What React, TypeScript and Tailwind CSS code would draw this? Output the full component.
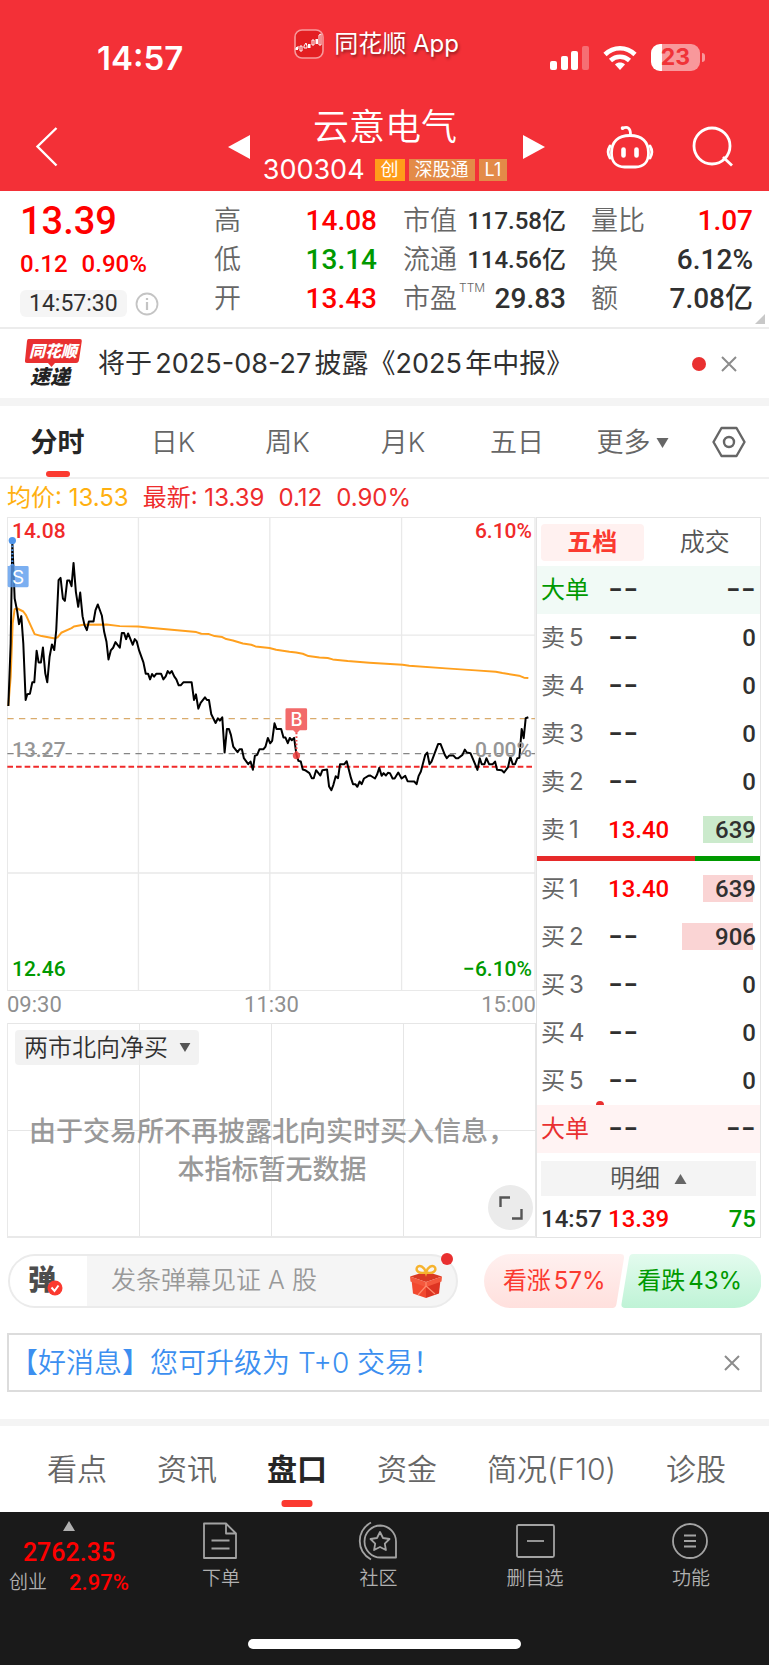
import type { ReactNode } from "react";

const NUM = "[font-family:Roboto,'Noto_Sans_CJK_SC',sans-serif]";

const PRICE_LINE =
  "25,588 32,400 37,95 44,265 52,305 57,342 64,318 70,400 77,570 82,553 90,551 97,517 103,517 110,422 116,457 123,457 129,412 136,490 142,517 149,440 156,403 163,420 169,360 176,210 182,203 189,265 195,272 202,211 209,211 215,228 221,158 228,245 235,290 241,247 248,318 254,345 261,360 267,334 281,334 287,300 294,283 306,316 313,365 320,395 326,448 333,421 340,413 347,396 360,413 366,369 373,369 379,387 385,370 399,404 405,387 411,394 418,421 431,457 438,491 445,491 451,508 457,492 463,500 470,491 484,491 491,508 498,499 504,483 510,490 516,483 524,500 530,508 537,526 543,526 551,517 576,517 583,570 589,553 596,596 603,579 616,562 622,570 628,570 635,613 648,639 655,625 661,632 668,622 675,728 682,657 688,657 694,675 701,710 714,727 720,718 727,718 733,745 746,763 753,755 760,780 766,738 773,735 780,718 792,718 798,710 805,684 812,700 818,693 825,640 831,657 845,657 852,683 858,683 865,700 871,684 877,691 884,684 891,735 897,753 904,755 910,779 917,781 930,790 937,805 943,805 950,781 963,797 969,781 983,779 989,830 996,841 1002,825 1009,799 1016,805 1022,763 1035,763 1042,754 1055,805 1061,823 1068,823 1074,831 1081,815 1087,823 1094,806 1107,798 1113,797 1127,806 1133,795 1140,774 1147,798 1153,790 1160,797 1166,789 1172,790 1180,806 1186,806 1197,788 1207,806 1218,798 1225,814 1245,815 1252,823 1258,799 1265,785 1278,735 1284,728 1291,763 1297,755 1317,702 1324,702 1337,735 1343,745 1350,737 1363,737 1370,745 1377,745 1390,735 1397,719 1403,728 1414,730 1428,763 1435,780 1442,745 1448,763 1456,763 1462,745 1470,763 1481,763 1488,755 1494,780 1508,781 1515,788 1527,772 1534,740 1541,763 1548,763 1555,745 1561,744 1568,657 1574,685 1580,625 1588,622";

const AVERAGE_LINE =
  "25,588 32,500 38,340 44,297 52,295 70,304 78,315 104,372 125,378 165,385 173,382 184,368 215,354 222,349 250,344 320,343 360,348 415,349 450,353 590,366 605,371 628,372 645,378 668,381 680,387 700,391 730,400 755,404 768,409 810,414 830,419 870,425 890,427 910,431 927,438 960,442 985,444 1000,448 1045,453 1110,458 1210,464 1230,467 1340,475 1430,481 1490,485 1510,489 1560,497 1575,503 1588,504";

function StatusBar() {
  return (
    <div className="relative flex h-[94px] items-start justify-between pt-[38px] pr-[64px] pl-[97px]">
      <span className="text-[33px] leading-10 font-semibold">14:57</span>
      <div className="absolute inset-x-0 top-[28px] flex items-center justify-center gap-[10px] pr-[16px]">
        <svg width="30" height="30" viewBox="0 0 30 30" aria-hidden="true">
          <rect x="1" y="1" width="28" height="28" rx="7" fill="#e31f22" stroke="#f79a9c" strokeWidth="1.6" />
          <g stroke="#fff" strokeWidth="1" fill="none">
            <path d="M1 20h3v-3M6 19v3h2v-5H6zM10 17l2-3 1 3v2h-3zM18 12v4h2v-5h-2z" />
            <path d="M25 6l2-1v11h-2z" />
          </g>
          <path d="M2 18h2v3H2zM14 15h2.500v4H14zM21.500 10h2.500v5h-2.500z" fill="#fff" />
        </svg>
        <span className="text-[24px] leading-8 [text-shadow:1px_2px_3px_rgba(0,0,0,0.45)]">同花顺 App</span>
      </div>
      <div className="flex items-center gap-[14px] pt-[6px]">
        <svg width="39" height="26" viewBox="0 0 39 26" fill="#fff" aria-hidden="true">
          <rect x="0" y="16" width="7" height="9" rx="2" />
          <rect x="11" y="11" width="7" height="14" rx="2" />
          <rect x="21" y="6" width="7" height="19" rx="2" />
          <rect x="32" y="1" width="7" height="24" rx="2" opacity=".3" />
        </svg>
        <svg width="34" height="26" viewBox="0 0 34 26" fill="none" stroke="#fff" strokeWidth="4.600" aria-hidden="true">
          <path d="M2 9.500C10.500 1.200 23.500 1.200 32 9.500" />
          <path d="M7.500 15.500c5.500-5 13.500-5 19 0" />
          <path d="M17 25l-5-5.500c2.800-2.600 7.200-2.600 10 0z" fill="#fff" stroke="none" />
        </svg>
        <div className="flex items-center gap-[2px]">
          <span className="flex h-[27px] w-[49px] items-center justify-center rounded-[9px] bg-[linear-gradient(90deg,#fff_22%,#f8989b_22%)] text-[23px] leading-none font-bold text-[#f03238]">
            23
          </span>
          <span className="h-[9px] w-[3px] rounded-r-full bg-[#f8989b]" />
        </div>
      </div>
    </div>
  );
}

function Badge({ children, strong }: { children: ReactNode; strong?: boolean }) {
  return (
    <span className={`flex h-[22px] items-center px-[6px] text-[18px] leading-none ${strong ? "bg-[#ff9c1a]" : "bg-[#e38b48]"}`}>
      {children}
    </span>
  );
}

function NavBar() {
  return (
    <div className="flex h-[97px] items-center">
      <div className="w-[228px] pl-[34px]">
        <button aria-label="返回" className="block pt-[8px]">
          <svg width="26" height="42" viewBox="0 0 26 42" fill="none" stroke="#fff" strokeWidth="2.400">
            <path d="M22.500 2L3.500 20.500L22.500 39.500" />
          </svg>
        </button>
      </div>
      <div className="flex flex-1 items-center justify-between">
        <button aria-label="上一只" className="pt-[8px]">
          <svg width="23" height="26" viewBox="0 0 23 26" fill="#fff"><path d="M0 13L22 1v24z" /></svg>
        </button>
        <div className="flex flex-col items-center gap-[7px] pt-[3px] pr-[3px]">
          <h1 className="text-[36px] leading-[44px] font-[350]">云意电气</h1>
          <div className="flex h-[28px] items-center gap-[4px]">
            <span className="mr-[6px] text-[27px] leading-7">300304</span>
            <Badge strong>创</Badge>
            <Badge>深股通</Badge>
            <Badge>L1</Badge>
          </div>
        </div>
        <button aria-label="下一只" className="pt-[8px]">
          <svg width="23" height="26" viewBox="0 0 23 26" fill="#fff"><path d="M23 13L1 1v24z" /></svg>
        </button>
      </div>
      <div className="flex w-[224px] items-center justify-end gap-[38px] pt-[8px] pr-[35px]">
        <button aria-label="智能助手">
          <svg width="48" height="46" viewBox="0 0 48 46" fill="none" stroke="#fff" strokeWidth="2.800" strokeLinecap="round">
            <path d="M16.500 4.500c5-2.500 8-.5 8 6" />
            <circle cx="16.500" cy="4" r="1.800" fill="#fff" stroke="none" />
            <path d="M24 11.500c12 0 18.500 6.500 18.500 17.500 0 9-5 14-13 14h-11c-8 0-13-5-13-14 0-11 6.500-17.500 18.500-17.500z" />
            <path d="M4 22c-2.500 4-2.500 8 0 12M44 22c2.500 4 2.500 8 0 12" />
            <path d="M17.500 25.500v6M30.500 25.500v6" strokeWidth="4.600" />
          </svg>
        </button>
        <button aria-label="搜索">
          <svg width="42" height="42" viewBox="0 0 42 42" fill="none" stroke="#fff" strokeWidth="2.800">
            <circle cx="20" cy="20" r="18" />
            <path d="M31 31l9 8.500" />
          </svg>
        </button>
      </div>
    </div>
  );
}

type Metric = { label: string; value: string; tone: string; small?: boolean; note?: string };

function MetricColumn({ items }: { items: Metric[] }) {
  return (
    <dl className="flex flex-col">
      {items.map((m) => (
        <div key={m.label} className="flex h-[39px] items-center justify-between">
          <dt className="flex items-center text-[27px] leading-9 font-[350] text-[#666]">
            {m.label}
            {m.note && <sup className="self-start pt-[7px] pl-[2px] text-[12px] leading-none">{m.note}</sup>}
          </dt>
          <dd className={`${NUM} font-medium whitespace-nowrap ${m.small ? "text-[24px]" : "text-[28px]"} ${m.tone}`}>
            {m.value}
          </dd>
        </div>
      ))}
    </dl>
  );
}

const RED = "text-[#ff0000]";
const GREEN = "text-[#009900]";
const INK = "text-[#303030]";

function Quote() {
  return (
    <section className="relative grid h-[138px] grid-cols-[214fr_163fr_26fr_163fr_25fr_162fr_16fr] border-b-2 border-[#ececec] pt-[10px]">
      <div className={`${NUM} pl-[20px]`}>
        <p className={`text-[38px] leading-[40px] font-medium ${RED}`}>13.39</p>
        <p className={`flex gap-[14px] pt-[8px] text-[24px] leading-[30px] font-medium ${RED}`}>
          <span>0.12</span>
          <span>0.90%</span>
        </p>
        <div className="flex items-center gap-[8px] pt-[11px]">
          <span className={`rounded-[6px] bg-[#f5f5f5] px-[9px] text-[23px] leading-[27px] ${INK}`}>14:57:30</span>
          <svg width="24" height="24" viewBox="0 0 24 24" fill="none" stroke="#c4c4c4" strokeWidth="1.800" aria-hidden="true">
            <circle cx="12" cy="12" r="10.500" />
            <path d="M12 10v8M12 6v2" strokeWidth="2.200" />
          </svg>
        </div>
      </div>
      <MetricColumn
        items={[
          { label: "高", value: "14.08", tone: RED },
          { label: "低", value: "13.14", tone: GREEN },
          { label: "开", value: "13.43", tone: RED },
        ]}
      />
      <span />
      <MetricColumn
        items={[
          { label: "市值", value: "117.58亿", tone: INK, small: true },
          { label: "流通", value: "114.56亿", tone: INK, small: true },
          { label: "市盈", value: "29.83", tone: INK, note: "TTM" },
        ]}
      />
      <span />
      <MetricColumn
        items={[
          { label: "量比", value: "1.07", tone: RED },
          { label: "换", value: "6.12%", tone: INK },
          { label: "额", value: "7.08亿", tone: INK },
        ]}
      />
      <svg className="absolute right-[4px] bottom-[3px]" width="10" height="10" viewBox="0 0 10 10" fill="#c8c8c8" aria-hidden="true">
        <path d="M10 0v10H0z" />
      </svg>
    </section>
  );
}

function Cross({ label }: { label: string }) {
  return (
    <button aria-label={label}>
      <svg width="16" height="16" viewBox="0 0 16 16" stroke="#8c8c8c" strokeWidth="2">
        <path d="M1 1l14 14M15 1L1 15" />
      </svg>
    </button>
  );
}

function News() {
  return (
    <section className="flex h-[77px] items-center border-b-8 border-[#f4f4f4] pr-[32px] pl-[24px]">
      <svg width="58" height="60" viewBox="0 -4 58 60" fontFamily="'Noto Sans CJK SC',sans-serif" fontWeight="900" fontStyle="italic" aria-label="同花顺速递">
        <path d="M4.500 1H56q2 0 1.800 2L55 22q-.4 3-3 3H31l-3.500 4L24 25H3q-2.300 0-2-2.500L3 3q.2-2 1.500-2z" fill="#e93030" />
        <text x="5" y="19" fontSize="16" fill="#fff">同花顺</text>
        <text x="6" y="46" fontSize="20" fill="#222">速递</text>
      </svg>
      <a href="#news" className="flex-1 pl-[16px] text-[27px] leading-9 whitespace-nowrap text-[#303030] [text-autospace:normal]">
        将于2025-08-27披露《2025年中报》
      </a>
      <span className="mr-[15px] size-[14px] rounded-full bg-[#e93030]" />
      <Cross label="关闭公告" />
    </section>
  );
}

function Caret({ className, up }: { className: string; up?: boolean }) {
  return (
    <svg className={className} viewBox="0 0 12 10" fill="currentColor" aria-hidden="true">
      <path d={up ? "M0 10L6 0l6 10z" : "M0 0h12L6 10z"} />
    </svg>
  );
}

function PeriodTabs() {
  return (
    <nav className="grid h-[73px] grid-cols-[115fr_116fr_113fr_118fr_110fr_121fr_76fr] border-b-2 border-[#f0f0f0] text-[27px] font-[350] text-[#666]">
      <button className="relative pt-[3px] font-bold text-[#262626]">
        分时
        <span className="absolute bottom-0 left-1/2 h-[6px] w-[24px] -translate-x-1/2 rounded-[3px] bg-[#fb3a30]" />
      </button>
      <button className="pt-[3px]">日K</button>
      <button className="pt-[3px]">周K</button>
      <button className="pt-[3px]">月K</button>
      <button className="pt-[3px]">五日</button>
      <button className="flex items-center justify-center gap-[5px] pt-[3px]">
        更多
        <Caret className="h-[10px] w-[13px] text-[#666]" />
      </button>
      <button aria-label="设置" className="flex items-center justify-center pr-[4px]">
        <svg width="34" height="32" viewBox="0 0 34 32" fill="none" stroke="#666" strokeWidth="2.400" strokeLinejoin="round">
          <path d="M9.500 2h15L32.500 16l-8 14h-15L1.500 16z" />
          <circle cx="17" cy="16" r="5" />
        </svg>
      </button>
    </nav>
  );
}

function PriceChart() {
  const label = "absolute text-[21px] leading-[24px] font-medium";
  return (
    <div className={`relative ${NUM}`}>
      <svg className="block h-auto w-full" viewBox="21 20 1590 1425" fill="none" aria-label="分时走势">
        <path d="M22 21H1608V1444H22zM416 21V1444M811 21V1444M1207 21V1444M22 375H1608M22 1090H1608" stroke="#e9e9e9" strokeWidth="4" />
        <path d="M22 626H1608" stroke="#d9ab6c" strokeWidth="4" strokeDasharray="19 16" />
        <path d="M22 731H1608" stroke="#858585" strokeWidth="4" strokeDasharray="19 16" />
        <path d="M22 771H1608" stroke="#f02a2a" strokeWidth="6" strokeDasharray="17 9" />
        <polyline points={AVERAGE_LINE} stroke="#ffa01e" strokeWidth="6" strokeLinejoin="round" />
        <polyline points={PRICE_LINE} stroke="#000" strokeWidth="6" strokeLinejoin="round" />
        <path d="M37 95V167" stroke="#4f95ea" strokeWidth="6" strokeDasharray="5 6" />
        <circle cx="37" cy="91" r="11" fill="#4f95ea" />
        <path d="M28 167l9-8 9 8h36q4 0 4 4v56q0 4-4 4H27q-4 0-4-4v-60z" fill="#5a9bee" opacity=".8" />
        <text x="54" y="220" textAnchor="middle" fontFamily="Inter" fontSize="57" fill="#fff">S</text>
        <path d="M891 668V730" stroke="#ef4b4b" strokeWidth="6" strokeDasharray="5 6" />
        <circle cx="891" cy="737" r="11" fill="#ef3b3b" opacity=".85" />
        <path d="M862 595h57q4 0 4 4v58q0 4-4 4h-18l-10 10-10-10h-19q-4 0-4-4v-58q0-4 4-4z" fill="#f26a6a" />
        <text x="891" y="648" textAnchor="middle" fontFamily="Inter" fontWeight="500" fontSize="55" fill="#fff">B</text>
      </svg>
      <span className={`${label} top-[2px] left-[5px] text-[#f02a2a]`}>14.08</span>
      <span className={`${label} top-[2px] right-[4px] text-[#f02a2a]`}>6.10%</span>
      <span className={`${label} top-1/2 left-[5px] -translate-y-4 text-[#969696]`}>13.27</span>
      <span className={`${label} top-1/2 right-[4px] -translate-y-4 text-[#969696]`}>0.00%</span>
      <span className={`${label} bottom-[10px] left-[5px] text-[#009900]`}>12.46</span>
      <span className={`${label} right-[4px] bottom-[10px] text-[#009900]`}>−6.10%</span>
    </div>
  );
}

function NorthboundPane() {
  return (
    <div className="relative grid flex-1 grid-cols-4 grid-rows-2 border-b-2 border-l border-[#e9e9e9]">
      {Array.from({ length: 8 }, (_, i) => (
        <span key={i} className="border-t border-r border-[#e6e6e6]" />
      ))}
      <div className="absolute inset-0 flex flex-col px-[7px] pt-[7px]">
        <button className="flex h-[35px] items-center gap-[11px] self-start rounded-[4px] bg-[#ececec]/70 pr-[8px] pl-[9px] text-[24px] leading-none font-[350] text-[#303030]">
          两市北向净买
          <Caret className="h-[9px] w-[12px] text-[#555]" />
        </button>
        <p className="-mx-[7px] pt-[48px] text-center text-[27px] leading-[38px] font-medium whitespace-nowrap text-[#999]">
          由于交易所不再披露北向实时买入信息，
          <br />
          本指标暂无数据
        </p>
      </div>
      <button aria-label="全屏" className="absolute right-[3px] bottom-[6px] flex size-[45px] items-center justify-center rounded-full bg-[#ebebeb]">
        <svg width="24" height="24" viewBox="0 0 24 24" fill="none" stroke="#555" strokeWidth="2.400">
          <path d="M1.500 11V1.500H11M13 22.500h9.500V13" />
        </svg>
      </button>
    </div>
  );
}

type Level = { side: string; level?: number; price?: string; volume?: string; bar?: string };

const ASKS: Level[] = [
  { side: "卖", level: 5, volume: "0" },
  { side: "卖", level: 4, volume: "0" },
  { side: "卖", level: 3, volume: "0" },
  { side: "卖", level: 2, volume: "0" },
  { side: "卖", level: 1, price: "13.40", volume: "639", bar: "w-[50px] bg-[#cbeacc]" },
];
const BIDS: Level[] = [
  { side: "买", level: 1, price: "13.40", volume: "639", bar: "w-[50px] bg-[#fad4d4]" },
  { side: "买", level: 2, volume: "906", bar: "w-[71px] bg-[#fad4d4]" },
  { side: "买", level: 3, volume: "0" },
  { side: "买", level: 4, volume: "0" },
  { side: "买", level: 5, volume: "0" },
];

function Dashes() {
  return <span className="[font-family:Inter,sans-serif] text-[33px] leading-[30px] font-normal">--</span>;
}

function LevelRow({ row, className }: { row: Level; className?: string }) {
  return (
    <tr className={`h-[48px] ${className ?? "text-[#666]"}`}>
      <th scope="row" className="w-[71px] pl-[4px] text-left text-[24px] leading-[30px] font-normal">
        {row.level ? (
          <span className="flex gap-[4px]">
            <span>{row.side}</span>
            <span>{row.level}</span>
          </span>
        ) : (
          row.side
        )}
      </th>
      <td className={`${NUM} text-[24px] leading-[30px] font-medium ${row.price ? RED : INK}`}>
        {row.price ?? <Dashes />}
      </td>
      <td className={`${NUM} relative pr-[4px] text-right text-[24px] leading-[30px] font-medium ${INK}`}>
        {row.bar && <span className={`absolute top-[10px] right-[7px] h-[27px] ${row.bar}`} />}
        <span className="relative">{row.volume ?? <Dashes />}</span>
      </td>
    </tr>
  );
}

function OrderBook() {
  return (
    <aside className="flex w-[225px] flex-col border border-[#e4e4e4]">
      <div className="flex h-[48px] items-center gap-[10px] px-[4px] text-[25px]">
        <button className="h-[37px] flex-1 rounded-[4px] bg-[#fff1f0] leading-none font-bold text-[#fb3a30]">五档</button>
        <button className="h-[37px] flex-1 leading-none font-[350] text-[#555]">成交</button>
      </div>
      <table className="w-full border-collapse">
        <tbody>
          <LevelRow row={{ side: "大单" }} className="bg-[#f1faf6] text-[#009900]" />
          {ASKS.map((r) => (
            <LevelRow key={r.level} row={r} />
          ))}
        </tbody>
      </table>
      <div className="mt-[2px] mb-[4px] flex h-[5px]">
        <span className="w-[71%] bg-[#e62a2a]" />
        <span className="flex-1 bg-[#009900]" />
      </div>
      <div className="relative">
        <table className="w-full border-collapse">
          <tbody>
            {BIDS.map((r) => (
              <LevelRow key={r.level} row={r} />
            ))}
            <LevelRow row={{ side: "大单" }} className="bg-[#fff3f3] text-[#e93030]" />
          </tbody>
        </table>
        <span className="absolute bottom-[48px] left-[59px] h-[4px] w-[8px] rounded-t-full bg-[#e93030]" />
      </div>
      <button className="mx-[4px] mt-[8px] flex h-[35px] items-center justify-center gap-[14px] bg-[#f4f4f4] text-[25px] leading-none font-[350] text-[#555]">
        明细
        <Caret up className="h-[10px] w-[13px] text-[#666]" />
      </button>
      <div className={`${NUM} flex h-[41px] items-center px-[4px] pt-[4px] text-[24px] leading-[30px] font-medium ${INK}`}>
        <span className="w-[67px]">14:57</span>
        <span className={`flex-1 ${RED}`}>13.39</span>
        <span className={GREEN}>75</span>
      </div>
    </aside>
  );
}

function Market() {
  return (
    <section>
      <div className="flex h-[38px] items-center gap-[14px] pl-[7px] text-[24px] leading-none text-[#ee2c2c]">
        <span className="text-[#ffb010]">均价: 13.53</span>
        <span>最新: 13.39</span>
        <span>0.12</span>
        <span>0.90%</span>
      </div>
      <div className="flex pr-[8px] pl-[7px]">
        <div className="flex min-w-0 flex-1 flex-col">
          <PriceChart />
          <div className={`${NUM} flex h-[32px] items-center justify-between pb-[4px] text-[22px] leading-none text-[#8f8f8f]`}>
            <span>09:30</span>
            <span>11:30</span>
            <span>15:00</span>
          </div>
          <NorthboundPane />
        </div>
        <OrderBook />
      </div>
    </section>
  );
}

function Gift() {
  return (
    <svg width="34" height="36" viewBox="0 0 34 36" aria-hidden="true">
      <path d="M2.500 17L17 22v13L4 30.500z" fill="#f2492f" />
      <path d="M31.500 17L17 22v13l13-4.500z" fill="#dd3422" />
      <path d="M1 13.500L17 8.500l16 5-16 5.500z" fill="#d93a24" />
      <path d="M1 13.500L17 19l16-5.500-.5 5L17 24 1.500 18.500z" fill="#f4583d" />
      <path d="M17 23l-8 9M17 23l9 8M17 19v5" stroke="#ff8a6c" strokeWidth="1.200" />
      <path d="M17 9.500C10 11 6.500 8 8 4.500 10.500 1 15.500 4 17 9.500c1.500-5.500 6.500-8.500 9-5 1.500 3.500-2 6.500-9 5z" fill="none" stroke="#f6b32e" strokeWidth="2.400" />
    </svg>
  );
}

function Barrage() {
  return (
    <section className="flex h-[54px] items-center justify-between pr-[8px] pl-[8px]">
      <div className="relative flex h-full w-[450px] overflow-visible rounded-full border-2 border-[#ebebeb] bg-[#f5f5f5]">
        <button aria-label="弹幕" className="relative w-[77px] rounded-l-full bg-white pb-[3px] pl-[18px] text-left text-[28px] leading-none font-black text-[#4d4d4d]">
          弹
          <svg className="absolute top-[24px] left-[37px]" width="16" height="16" viewBox="0 0 16 16" fill="none" aria-hidden="true">
            <circle cx="8" cy="8" r="7.500" fill="#fb3a30" />
            <path d="M4.500 7.500L7.500 11l4-5.500" stroke="#fff" strokeWidth="2" />
          </svg>
        </button>
        <input
          aria-label="发条弹幕"
          placeholder="发条弹幕见证 A 股"
          className="min-w-0 flex-1 bg-transparent pl-[24px] text-[25px] font-[350] text-[#555] outline-none placeholder:text-[#999]"
        />
        <button aria-label="礼物" className="mr-[13px]">
          <Gift />
        </button>
        <span className="absolute -top-[3px] right-[3px] size-[12px] rounded-full bg-[#e93030]" />
      </div>
      <div className="grid h-full w-[277px] grid-cols-2 text-[24px] [text-autospace:normal]">
        <button className="relative -mr-[2px] flex items-center justify-center text-[#fb3a30]">
          <svg className="absolute inset-0 size-full" viewBox="0 0 140 54" preserveAspectRatio="none" aria-hidden="true">
            <defs>
              <linearGradient id="rise" x1="0" y1="0" x2="0" y2="1">
                <stop offset="0" stopColor="#fff0ef" />
                <stop offset="1" stopColor="#ffe0dd" />
              </linearGradient>
            </defs>
            <path d="M27 0H136q4 0 3.500 4L132 50q-.6 4-4 4H27A27 27 0 0 1 27 0z" fill="url(#rise)" />
          </svg>
          <span className="relative">看涨57%</span>
        </button>
        <button className="relative -ml-[2px] flex items-center justify-center pr-[2px] text-[#009900]">
          <svg className="absolute inset-0 size-full" viewBox="0 0 140 54" preserveAspectRatio="none" aria-hidden="true">
            <defs>
              <linearGradient id="fall" x1="0" y1="0" x2="0" y2="1">
                <stop offset="0" stopColor="#e3fbee" />
                <stop offset="1" stopColor="#bff3d6" />
              </linearGradient>
            </defs>
            <path d="M12 0H113a27 27 0 0 1 0 54H4q-4 0-3.500-4L8 4q.6-4 4-4z" fill="url(#fall)" />
          </svg>
          <span className="relative">看跌43%</span>
        </button>
      </div>
    </section>
  );
}

function SectionTabs() {
  const tabs = ["看点", "资讯", "盘口", "资金", "简况(F10)", "诊股"];
  return (
    <nav className="flex h-[86px] justify-between pr-[43px] pl-[47px] text-[30px] font-[350] text-[#666]">
      {tabs.map((t) => (
        <button key={t} className={t === "盘口" ? "relative font-bold text-[#262626]" : ""}>
          {t}
          {t === "盘口" && (
            <span className="absolute bottom-[5px] left-1/2 h-[7px] w-[31px] -translate-x-1/2 rounded-[3px] bg-[#fb3a30]" />
          )}
        </button>
      ))}
    </nav>
  );
}

function BottomItem({ label, children }: { label: string; children: ReactNode }) {
  return (
    <button className="flex flex-col items-center gap-[5px]">
      <svg width="42" height="40" viewBox="0 0 42 40" fill="none" stroke="#a3a3a3" strokeWidth="1.800" strokeLinejoin="round" aria-hidden="true">
        {children}
      </svg>
      <span className="leading-[26px]">{label}</span>
    </button>
  );
}

function BottomBar() {
  return (
    <footer className="flex flex-1 flex-col items-center justify-between bg-[#1a1a1a] pb-[16px]">
      <div className="grid w-full grid-cols-[142fr_158fr_157fr_156fr_156fr] items-start pt-[9px] text-[19px] font-[350] text-[#b0b0b0]">
        <button className="flex flex-col items-center pr-[4px]">
          <Caret up className="h-[10px] w-[18px]" />
          <span className={`${NUM} pt-[7px] text-[25px] leading-[30px] font-medium ${RED}`}>2762.35</span>
          <span className="flex items-center gap-[22px] leading-[30px]">
            创业
            <span className={`${NUM} text-[22px] font-medium ${RED}`}>2.97%</span>
          </span>
        </button>
        <BottomItem label="下单">
          <path d="M4 2.500h22l10 10V37H4zM26 2.500v10h10M11.500 19.500h18M11.500 27.500h18" />
        </BottomItem>
        <BottomItem label="社区">
          <path d="M13 1.500C-2 10-2 30 13 38.500" />
          <path d="M22.500 4.500A16 16 0 1 0 22.500 36.500H38V20.500A16 16 0 0 0 22.500 4.500z" />
          <path d="M22 11l3 6 6.500 1-4.700 4.600 1.100 6.400-5.900-3-5.900 3 1.100-6.400-4.700-4.600 6.500-1z" />
        </BottomItem>
        <BottomItem label="删自选">
          <rect x="3" y="4" width="37" height="32" rx="1.500" />
          <path d="M13 20h17" />
        </BottomItem>
        <BottomItem label="功能">
          <circle cx="20" cy="20" r="17" />
          <path d="M14 14.500h12M14 20h12M14 25.500h12" />
        </BottomItem>
      </div>
      <span className="h-[10px] w-[273px] rounded-full bg-white" />
    </footer>
  );
}

export default function App() {
  return (
    <div className="flex min-h-screen flex-col bg-white [font-family:Inter,'Noto_Sans_CJK_SC',sans-serif]">
      <header className="bg-[#f33037] text-white">
        <StatusBar />
        <NavBar />
      </header>
      <Quote />
      <News />
      <PeriodTabs />
      <Market />
      <div className="pt-[16px]">
        <Barrage />
      </div>
      <section className="mx-[7px] mt-[25px] mb-[27px] flex h-[59px] items-center justify-between border-2 border-[#dcdcdc] pr-[20px] pl-[1px]">
        <a href="#upgrade" className="text-[28px] leading-10 font-[350] text-[#3c8ff0]">
          【好消息】您可升级为 T+0 交易！
        </a>
        <Cross label="关闭提示" />
      </section>
      <div className="h-[7px] bg-[#f4f4f4]" />
      <SectionTabs />
      <BottomBar />
    </div>
  );
}
